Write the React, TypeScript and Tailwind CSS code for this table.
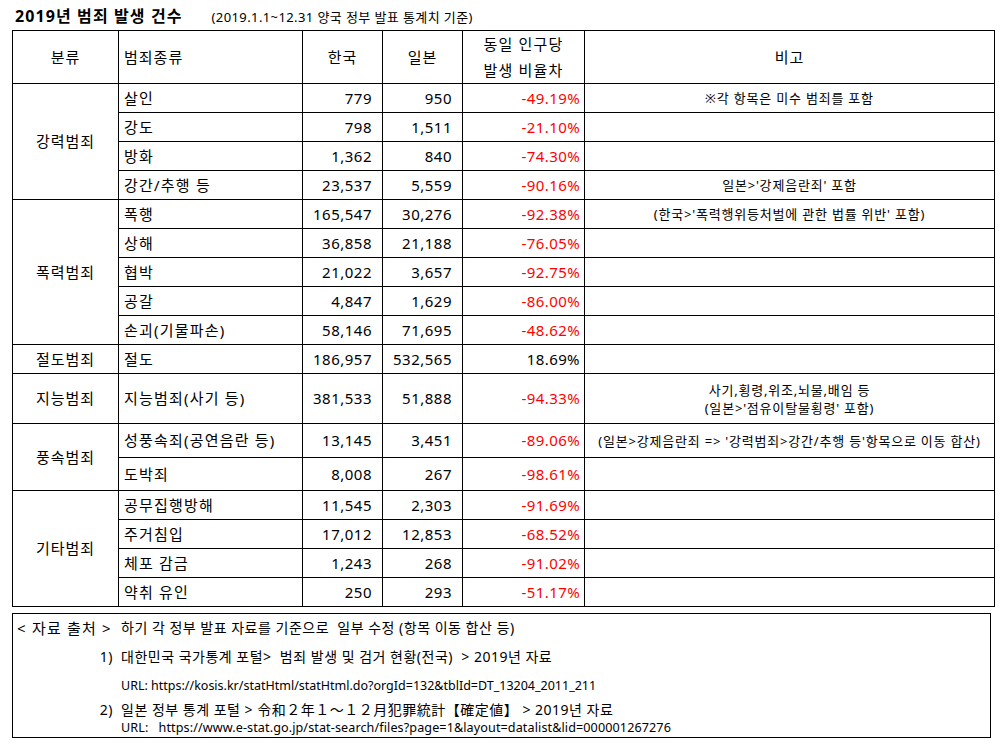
const font = "font-['Noto_Sans','Noto_Sans_CJK_KR',sans-serif]";

type Row = { name: string; kr: string; jp: string; diff: string; red: boolean; note?: string[]; h: number };
type Group = { label: string; rows: Row[] };

const groups: Group[] = [
  {
    label: '강력범죄',
    rows: [
      { name: '살인', kr: '779', jp: '950', diff: '-49.19%', red: true, note: ['※각 항목은 미수 범죄를 포함'], h: 29 },
      { name: '강도', kr: '798', jp: '1,511', diff: '-21.10%', red: true, h: 29 },
      { name: '방화', kr: '1,362', jp: '840', diff: '-74.30%', red: true, h: 29 },
      { name: '강간/추행 등', kr: '23,537', jp: '5,559', diff: '-90.16%', red: true, note: ["일본>'강제음란죄' 포함"], h: 29 },
    ],
  },
  {
    label: '폭력범죄',
    rows: [
      { name: '폭행', kr: '165,547', jp: '30,276', diff: '-92.38%', red: true, note: ["(한국>'폭력행위등처벌에 관한 법률 위반' 포함)"], h: 29 },
      { name: '상해', kr: '36,858', jp: '21,188', diff: '-76.05%', red: true, h: 29 },
      { name: '협박', kr: '21,022', jp: '3,657', diff: '-92.75%', red: true, h: 29 },
      { name: '공갈', kr: '4,847', jp: '1,629', diff: '-86.00%', red: true, h: 29 },
      { name: '손괴(기물파손)', kr: '58,146', jp: '71,695', diff: '-48.62%', red: true, h: 29 },
    ],
  },
  {
    label: '절도범죄',
    rows: [{ name: '절도', kr: '186,957', jp: '532,565', diff: '18.69%', red: false, h: 29 }],
  },
  {
    label: '지능범죄',
    rows: [
      {
        name: '지능범죄(사기 등)', kr: '381,533', jp: '51,888', diff: '-94.33%', red: true,
        note: ['사기,횡령,위조,뇌물,배임 등', "(일본>'점유이탈물횡령' 포함)"], h: 50,
      },
    ],
  },
  {
    label: '풍속범죄',
    rows: [
      {
        name: '성풍속죄(공연음란 등)', kr: '13,145', jp: '3,451', diff: '-89.06%', red: true,
        note: ["(일본>강제음란죄  => '강력범죄>강간/추행 등'항목으로 이동 합산)"], h: 34,
      },
      { name: '도박죄', kr: '8,008', jp: '267', diff: '-98.61%', red: true, h: 33 },
    ],
  },
  {
    label: '기타범죄',
    rows: [
      { name: '공무집행방해', kr: '11,545', jp: '2,303', diff: '-91.69%', red: true, h: 29 },
      { name: '주거침입', kr: '17,012', jp: '12,853', diff: '-68.52%', red: true, h: 29 },
      { name: '체포 감금', kr: '1,243', jp: '268', diff: '-91.02%', red: true, h: 29 },
      { name: '약취 유인', kr: '250', jp: '293', diff: '-51.17%', red: true, h: 29 },
    ],
  },
];

const cell = 'border border-black p-0';

export default function App() {
  return (
    <div className={`w-[1006px] h-[744px] bg-white text-black overflow-hidden ${font}`}>
      <div className="flex items-end h-[30px] pl-[15px] pb-[6px]">
        <span className="text-[16px] font-bold leading-none tracking-[1.1px]">2019년 범죄 발생 건수</span>
        <span className="ml-[29px] text-[13px] leading-none tracking-[0.4px]">(2019.1.1~12.31 양국 정부 발표 통계치 기준)</span>
      </div>

      <table className="ml-[12px] border-collapse table-fixed w-[982px] text-[15px]">
        <colgroup>
          <col className="w-[106px]" />
          <col className="w-[184px]" />
          <col className="w-[80px]" />
          <col className="w-[80px]" />
          <col className="w-[122px]" />
          <col className="w-[410px]" />
        </colgroup>
        <thead>
          <tr className="h-[53px]">
            <th className={`${cell} font-normal text-center tracking-[1px]`}>분류</th>
            <th className={`${cell} font-normal text-left pl-[5px] tracking-[1px]`}>범죄종류</th>
            <th className={`${cell} font-normal text-center tracking-[1px]`}>한국</th>
            <th className={`${cell} font-normal text-center tracking-[1px]`}>일본</th>
            <th className={`${cell} font-normal text-center leading-[26px] tracking-[1.2px]`}>
              동일 인구당
              <br />
              발생 비율차
            </th>
            <th className={`${cell} font-normal text-center tracking-[1px]`}>비고</th>
          </tr>
        </thead>
        <tbody>
          {groups.map((g) =>
            g.rows.map((r, i) => (
              <tr key={g.label + r.name} style={{ height: r.h }}>
                {i === 0 && (
                  <td rowSpan={g.rows.length} className={`${cell} text-center tracking-[1px]`}>
                    {g.label}
                  </td>
                )}
                <td className={`${cell} pl-[5px] whitespace-nowrap tracking-[1.2px]`}>{r.name}</td>
                <td className={`${cell} text-right pr-[10px] tracking-[0.5px]`}>{r.kr}</td>
                <td className={`${cell} text-right pr-[10px] tracking-[0.5px]`}>{r.jp}</td>
                <td className={`${cell} text-right pr-[4px] tracking-[0.4px] ${r.red ? 'text-[#ff0000]' : ''}`}>{r.diff}</td>
                <td className={`${cell} text-center text-[13px] leading-[18px] tracking-[0.8px] whitespace-nowrap`}>
                  {r.note?.map((n) => (
                    <div key={n}>{n}</div>
                  ))}
                </td>
              </tr>
            ))
          )}
        </tbody>
      </table>

      <div className="ml-[12px] mt-[6px] w-[979px] h-[125px] border border-black text-[14px] leading-none tracking-[0.5px]">
        <div className="flex items-center h-[28px]">
          <span className="w-[108px] shrink-0 pl-[4px] text-[15px] tracking-[1.2px] whitespace-nowrap">&lt; 자료 출처 &gt;</span>
          <span className="whitespace-nowrap">하기 각 정부 발표 자료를 기준으로&nbsp; 일부 수정 (항목 이동 합산 등)</span>
        </div>
        <div className="flex items-center h-[30px]">
          <span className="w-[108px] shrink-0 text-right pr-[8px]">1)</span>
          <span className="whitespace-nowrap">대한민국 국가통계 포털&gt;&nbsp; 범죄 발생 및 검거 현황(전국)&nbsp; &gt; 2019년 자료</span>
        </div>
        <div className="flex items-center h-[28px] pl-[108px] text-[12.5px] tracking-normal whitespace-nowrap">
          URL: https://kosis.kr/statHtml/statHtml.do?orgId=132&amp;tblId=DT_13204_2011_211
        </div>
        <div className="flex items-center h-[20px]">
          <span className="w-[108px] shrink-0 text-right pr-[8px]">2)</span>
          <span className="whitespace-nowrap">일본 정부 통계 포털 &gt; 令和２年１～１２月犯罪統計【確定値】 &gt; 2019년 자료</span>
        </div>
        <div className="flex items-center h-[17px] pl-[108px] text-[12.6px] tracking-[0.1px] whitespace-nowrap">
          URL:&nbsp;&nbsp; https://www.e-stat.go.jp/stat-search/files?page=1&amp;layout=datalist&amp;lid=000001267276
        </div>
      </div>
    </div>
  );
}
